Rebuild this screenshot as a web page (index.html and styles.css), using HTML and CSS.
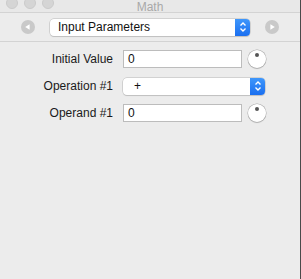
FILE: index.html
```html
<!DOCTYPE html>
<html>
<head>
<meta charset="utf-8">
<link rel="stylesheet" href="styles.css">
</head>
<body>
<div class="window">
  <div class="titlebar">
    <div class="lights"><span class="light"></span><span class="light"></span><span class="light"></span></div>
    <div class="title">Math</div>
  </div>
  <div class="toolbar">
    <span class="navbtn"><svg width="14" height="14" viewBox="0 0 14 14"><circle cx="7" cy="7" r="7" fill="#c9c9c9"/><path d="M4.2 7 L8.6 4.2 L8.6 9.8 Z" fill="#fff"/></svg></span>
    <div class="popup wide">
      <span class="popup-text">Input Parameters</span>
      <span class="stepper"><svg width="8" height="12" viewBox="0 0 8 12"><path d="M1.5 4.5 L4 2 L6.5 4.5 M1.5 7.5 L4 10 L6.5 7.5" stroke="#fff" stroke-width="1.4" fill="none"/></svg></span>
    </div>
    <span class="navbtn"><svg width="14" height="14" viewBox="0 0 14 14"><circle cx="7" cy="7" r="7" fill="#c9c9c9"/><path d="M9.8 7 L5.4 4.2 L5.4 9.8 Z" fill="#fff"/></svg></span>
  </div>
  <div class="form">
    <label class="label">Initial Value</label>
    <div class="ctl">
      <div class="field">0</div>
      <span class="dial"><span class="dot"></span></span>
    </div>
    <label class="label">Operation #1</label>
    <div class="ctl">
      <div class="popup op">
        <span class="popup-text plus">+</span>
        <span class="stepper"><svg width="8" height="12" viewBox="0 0 8 12"><path d="M1.5 4.5 L4 2 L6.5 4.5 M1.5 7.5 L4 10 L6.5 7.5" stroke="#fff" stroke-width="1.4" fill="none"/></svg></span>
      </div>
    </div>
    <label class="label">Operand #1</label>
    <div class="ctl">
      <div class="field">0</div>
      <span class="dial"><span class="dot"></span></span>
    </div>
  </div>
</div>
</body>
</html>
```
FILE: styles.css
```css
html, body {
  margin: 0;
  padding: 0;
  background: #ececec;
}
body {
  font-family: "Liberation Sans", Arial, sans-serif;
  font-size: 12px;
  color: #1a1a1a;
}
.window {
  width: 300px;
  height: 279px;
  border-right: 1px solid #4a4a4a;
  background: #ececec;
  overflow: hidden;
}
.titlebar {
  height: 12px;
  border-bottom: 1px solid #d3d3d3;
  display: flex;
  align-items: flex-start;
  position: relative;
  background: #e8e8e8;
}
.lights {
  display: flex;
  gap: 6px;
  margin-left: 6px;
  margin-top: -3px;
}
.light {
  width: 12px;
  height: 12px;
  border-radius: 50%;
  background: #d5d5d5;
  border: 0.5px solid #cbcbcb;
  box-sizing: border-box;
}
.title {
  position: absolute;
  left: 0;
  right: 0;
  top: 0;
  line-height: 14px;
  text-align: center;
  color: #a8a8a8;
  font-size: 12px;
}
.toolbar {
  height: 28px;
  border-bottom: 1px solid #d3d3d3;
  display: flex;
  align-items: center;
  padding-left: 21px;
  gap: 15px;
  box-sizing: content-box;
}
.navbtn {
  display: flex;
  width: 14px;
  height: 14px;
}
.popup {
  display: flex;
  align-items: stretch;
  background: #fff;
  border-radius: 4px;
  box-shadow: 0 0 0 0.5px #b8b8b8, 0 1px 1px rgba(0,0,0,0.15);
  height: 17px;
  box-sizing: border-box;
}
.popup.wide {
  width: 200px;
}
.popup-text {
  flex: 1;
  padding-left: 8px;
  line-height: 17px;
  color: #111;
}
.stepper {
  width: 15px;
  background: linear-gradient(#3f97fb, #1a6ff0);
  border-radius: 0 4px 4px 0;
  display: flex;
  align-items: center;
  justify-content: center;
}
.form {
  display: grid;
  grid-template-columns: 113px 1fr;
  column-gap: 10px;
  row-gap: 9px;
  padding-top: 8px;
  align-items: center;
}
.label {
  text-align: right;
  line-height: 18px;
}
.ctl {
  display: flex;
  align-items: center;
  gap: 6px;
  height: 18px;
}
.field {
  width: 119px;
  height: 18px;
  box-sizing: border-box;
  background: #fff;
  border: 1px solid #bcbcbc;
  padding-left: 4px;
  line-height: 16px;
  color: #111;
}
.dial {
  width: 18px;
  height: 18px;
  border-radius: 50%;
  background: #fff;
  box-shadow: 0 0 0 0.5px #a8a8a8, 0 1px 1px rgba(0,0,0,0.2);
  position: relative;
}
.dot {
  position: absolute;
  left: 7px;
  top: 3px;
  width: 4px;
  height: 4px;
  border-radius: 50%;
  background: #555;
}
.popup.op {
  width: 142px;
}
.plus {
  padding-left: 11px;
}
```
